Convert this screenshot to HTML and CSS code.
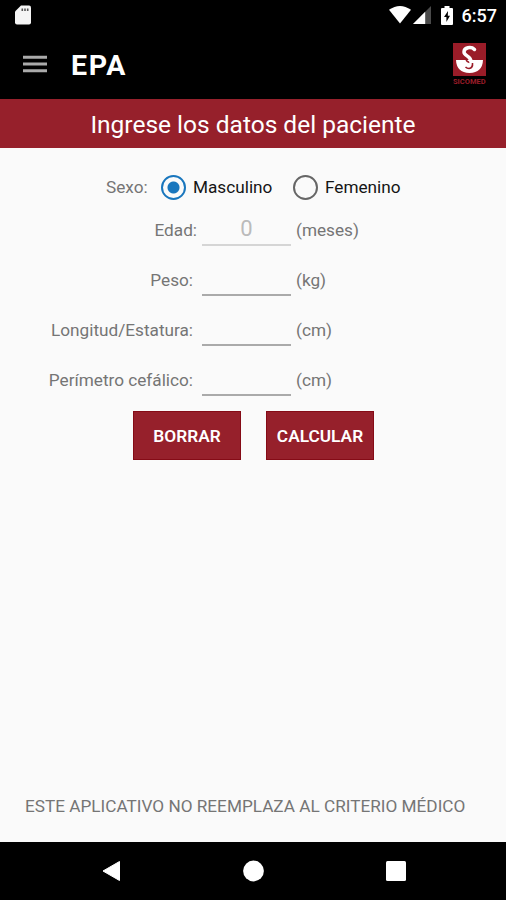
FILE: index.html
```html
<!DOCTYPE html>
<html lang="es">
<head>
    <meta charset="UTF-8">
    <meta name="viewport" content="width=device-width, initial-scale=1.0">
    <title>EPA</title>
    <link rel="stylesheet" href="styles.css">
</head>
<body>
    <div class="status-bar">
        <svg class="sd-card" width="16" height="20" viewBox="0 0 16 20">
            <path d="M6 0.5H14Q16 0.5 16 2.5V17.5Q16 19.5 14 19.5H2Q0 19.5 0 17.5V6.5Z" fill="#f5f5f5"/>
            <path d="M6.5 3.5h1.6v2.6H6.5zM9.2 3.5h1.6v2.6H9.2zM11.9 3.5h1.6v2.6h-1.6z" fill="#555"/>
        </svg>
        <div class="status-icons">
            <svg width="22" height="18" viewBox="0 0 22 18">
                <path d="M0 3.8Q11 -3.8 22 3.8L11 17.5Z" fill="#fff"/>
            </svg>
            <svg width="18" height="18" viewBox="0 0 18 18">
                <path d="M18 0V18H0Z" fill="#4a4a4a"/>
                <path d="M12.2 5.8V18H0Z" fill="#fff"/>
            </svg>
            <svg class="battery" width="12" height="19" viewBox="0 0 12 19">
                <path d="M3.5 0h5v2H11q1 0 1 1v15q0 1-1 1H1q-1 0-1-1V3q0-1 1-1h2.5z" fill="#fff"/>
                <path d="M7 5L3 11h2.4v5L9 9.8H6.8z" fill="#000"/>
            </svg>
            <span class="clock">6:57</span>
        </div>
    </div>

    <header class="toolbar">
        <svg class="menu" width="24" height="18" viewBox="0 0 24 18">
            <path d="M0 2.2H24M0 9H24M0 15.8H24" stroke="#aaa" stroke-width="2.9"/>
        </svg>
        <h1>EPA</h1>
        <div class="logo">
            <svg width="33" height="33" viewBox="0 0 33 33">
                <rect width="33" height="33" fill="#9a1c28"/>
                <path d="M3 17H30Q29.5 29.5 16.5 30Q3.5 29.5 3 17Z" fill="#fff"/>
                <path d="M13 16.5Q13.5 18.5 16.5 19.5M19.5 20Q20 25 16 25.5Q14 25.5 12.5 24" fill="none" stroke="#9a1c28" stroke-width="1.6"/>
                <path d="M21.5 6.5C18 3 11 4.5 11 9C11 13 18 13 18 18.5" fill="none" stroke="#fff" stroke-width="3.5" stroke-linecap="round"/>
            </svg>
            <span>SICOMED</span>
        </div>
    </header>

    <h2 class="banner">Ingrese los datos del paciente</h2>

    <form class="patient-form">
        <div class="sex-row">
            <span class="sex-label">Sexo:</span>
            <label><input type="radio" name="sexo" checked><span>Masculino</span></label>
            <label><input type="radio" name="sexo"><span>Femenino</span></label>
        </div>
        <div class="row age">
            <label for="edad">Edad:</label>
            <input type="text" id="edad" placeholder="0">
            <span>(meses)</span>
        </div>
        <div class="row">
            <label for="peso">Peso:</label>
            <input type="text" id="peso">
            <span>(kg)</span>
        </div>
        <div class="row">
            <label for="talla">Longitud/Estatura:</label>
            <input type="text" id="talla">
            <span>(cm)</span>
        </div>
        <div class="row">
            <label for="perimetro">Perímetro cefálico:</label>
            <input type="text" id="perimetro">
            <span>(cm)</span>
        </div>
        <div class="buttons">
            <button type="reset">BORRAR</button>
            <button type="button">CALCULAR</button>
        </div>
    </form>

    <p class="notice">ESTE APLICATIVO NO REEMPLAZA AL CRITERIO MÉDICO</p>

    <nav class="nav-bar">
        <svg width="20" height="22" viewBox="0 0 20 22">
            <path d="M18.5 1.5V20.5L2 11Z" fill="#fff" stroke="#fff" stroke-linejoin="round"/>
        </svg>
        <svg width="22" height="22" viewBox="0 0 22 22">
            <circle cx="10.5" cy="11" r="10.4" fill="#fff"/>
        </svg>
        <svg width="20" height="20" viewBox="0 0 20 20">
            <rect width="20" height="20" rx="1.5" fill="#fff"/>
        </svg>
    </nav>
</body>
</html>
```

FILE: styles.css
```css
* {
    box-sizing: border-box;
}
body {
    margin: 0;
    height: 900px;
    display: flex;
    flex-direction: column;
    overflow: hidden;
    background-color: #fafafa;
    color: #757575;
    font-family: Roboto, "Liberation Sans", sans-serif;
    font-size: 17.2px;
}
svg {
    display: block;
    flex: none;
}
.status-bar {
    display: flex;
    justify-content: space-between;
    height: 32px;
    padding: 5px 9px 0 15px;
    background-color: #000;
}
.status-icons {
    display: flex;
    align-items: flex-start;
    gap: 2px;
    padding-top: 1px;
}
.battery {
    margin-left: 8px;
}
.clock {
    margin-left: 7px;
    color: #fff;
    font-size: 18px;
    font-weight: 500;
    line-height: 20px;
}
.toolbar {
    display: flex;
    align-items: center;
    height: 67px;
    padding: 0 19px 0 23px;
    background-color: #000;
}
.menu {
    margin-bottom: 3px;
}
.toolbar h1 {
    margin: 0 auto 0 24px;
    color: #fff;
    font-size: 28.5px;
    font-weight: 700;
    letter-spacing: 1.6px;
}
.logo {
    width: 34px;
    padding-bottom: 2px;
}
.logo span {
    display: block;
    color: #9a1c28;
    font-size: 7.5px;
    font-weight: 700;
    line-height: 11px;
}
.banner {
    height: 49px;
    margin: 0;
    background-color: #96202b;
    color: #fff;
    font-size: 24.5px;
    font-weight: 400;
    line-height: 51px;
    text-align: center;
}
.sex-row {
    display: flex;
    align-items: center;
    height: 58px;
    padding: 20px 0 0 106px;
}
.sex-label {
    width: 55px;
}
.sex-row label {
    display: flex;
    align-items: center;
    width: 132px;
    color: #151515;
}
.sex-row input {
    appearance: none;
    width: 25px;
    height: 25px;
    margin: 0 7px 0 0;
    border: 2.5px solid #666;
    border-radius: 50%;
}
.sex-row input:checked {
    border-color: #1976bd;
    background: radial-gradient(circle, #1976bd 5.5px, transparent 6.5px);
}
.row {
    display: grid;
    grid-template-columns: 193px 98px auto;
    align-items: end;
    height: 50px;
}
.row label {
    text-align: right;
    line-height: 32px;
}
.row span {
    padding-left: 5px;
    line-height: 32px;
}
.row input {
    width: 89px;
    height: 36px;
    margin-left: 9px;
    padding: 3px 0 0;
    border: 0;
    border-bottom: 2px solid #aaa;
    background: none;
    font: 22px Roboto, sans-serif;
    text-align: center;
}
.age {
    height: 40px;
}
.age label {
    margin-right: -4px;
}
.age input {
    border-color: #d5d5d5;
}
.age input::placeholder {
    color: #bbb;
}
.buttons {
    display: flex;
    gap: 25px;
    padding: 15px 0 0 133px;
}
button {
    width: 108px;
    height: 49px;
    padding: 0;
    border: 1px solid #850b16;
    background-color: #96202b;
    color: #fff;
    font: 600 17.3px Roboto, sans-serif;
}
.notice {
    margin: auto 0 26px 25px;
    line-height: 20px;
    white-space: nowrap;
}
.nav-bar {
    display: flex;
    align-items: center;
    justify-content: space-between;
    height: 58px;
    padding: 0 100px 0 101px;
    background-color: #000;
}
```
